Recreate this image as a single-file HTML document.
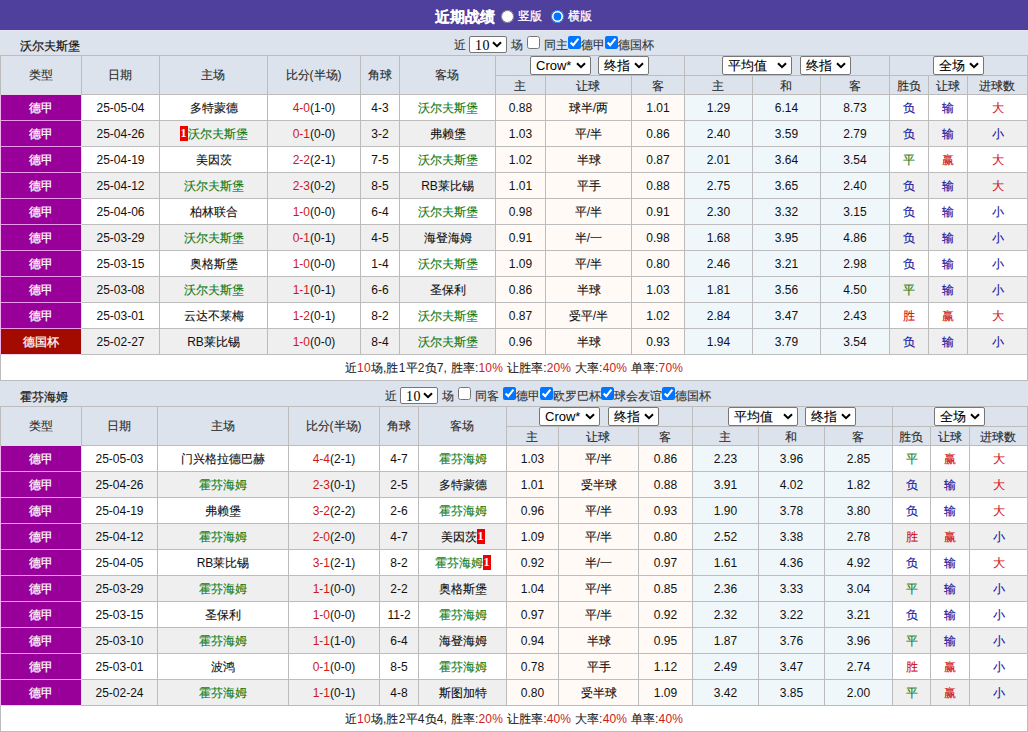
<!DOCTYPE html><html><head><meta charset="utf-8"><style>
*{margin:0;padding:0;box-sizing:border-box}
html,body{width:1028px;height:732px;overflow:hidden;background:#fff}
body{position:relative;font-family:"Liberation Sans", sans-serif;font-size:12px;color:#333}
.a,.c,.t,.sl,.cb,.rd{position:absolute}
.c{text-align:center;white-space:nowrap;overflow:hidden}
.t{white-space:nowrap;line-height:16px}
.hd{color:#2a2a2a;text-indent:-1px}
.sm{letter-spacing:0.18px;color:#222;padding-top:1px}
.k{font-style:normal;-webkit-text-stroke:0.12px currentColor}
.wt .k{-webkit-text-stroke:0.3px currentColor}
.lg .k{-webkit-text-stroke:0.25px currentColor}
.nm .k{-webkit-text-stroke:0.2px currentColor}
.dr{padding-top:1px;color:#111}
.lg{color:#fff}
.r{color:#cc1a1a}
.g{color:#117a11}
.bd{display:inline-block;background:#e00;color:#fff;width:8px;height:15px;line-height:15px;font-size:12px;font-weight:bold;text-align:center;vertical-align:middle;position:relative;top:-1px;font-family:"Liberation Serif",serif;overflow:hidden}
.sl{font-size:13px;color:#000;background:#fff;border:1px solid #767676;border-radius:2px;white-space:nowrap}
.sl10{position:absolute;font-family:"Liberation Serif",serif;font-size:14px;letter-spacing:0.5px;color:#000;background:#fff;border:1px solid #767676;border-radius:2px;white-space:nowrap}
.cb{width:13px;height:13px;margin:0}
.rd{width:13px;height:13px;margin:0}
</style></head><body><div class="a" style="left:0px;top:0px;width:1028px;height:30px;background:#50409e;"></div><div class="a" style="left:0px;top:30px;width:1028px;height:1px;background:#e4e4f6;"></div><div class="t" style="left:435px;top:7px;color:#fff;font-weight:bold;font-size:15px;line-height:20px"><i class="k">近期战绩</i></div><input type="radio" class="rd" style="left:501px;top:10px"><div class="t wt" style="left:518px;top:8px;color:#fff;line-height:16px"><i class="k">竖版</i></div><input type="radio" class="rd" checked style="left:551px;top:10px"><div class="t wt" style="left:568px;top:8px;color:#fff;line-height:16px"><i class="k">横版</i></div><div class="a" style="left:0px;top:31px;width:1028px;height:24px;background:#dce3ed;"></div><div class="a" style="left:0px;top:55px;width:1028px;height:39px;background:#dce3ed;"></div><div class="t nm" style="left:20px;top:38px;font-weight:500;font-size:12px;color:#111;line-height:16px"><i class="k">沃尔夫斯堡</i></div><div class="t" style="left:454px;top:37px;"><i class="k">近</i></div><div class="sl10" style="left:469px;top:36px;width:38px;height:17px;line-height:15px"><span style="position:absolute;left:5px;top:1px">10</span><svg width="10" height="7" viewBox="0 0 10 7" style="position:absolute;right:4px;top:50%;margin-top:-4px"><path d="M1 1.2 L5 5.2 L9 1.2" fill="none" stroke="#000" stroke-width="2"/></svg></div><div class="t" style="left:511px;top:37px;"><i class="k">场</i></div><input type="checkbox" class="cb" style="left:527px;top:36px" ><div class="t" style="left:544px;top:37px;"><i class="k">同主</i></div><input type="checkbox" class="cb" style="left:568px;top:36px" checked><div class="t" style="left:581px;top:37px;"><i class="k">德甲</i></div><input type="checkbox" class="cb" style="left:605px;top:36px" checked><div class="t" style="left:618px;top:37px;"><i class="k">德国杯</i></div><div class="sl" style="left:530px;top:56px;width:61px;height:19px;line-height:17px"><span style="position:absolute;left:5px;top:0px">Crow*</span><svg width="10" height="7" viewBox="0 0 10 7" style="position:absolute;right:4px;top:50%;margin-top:-4px"><path d="M1 1.2 L5 5.2 L9 1.2" fill="none" stroke="#000" stroke-width="2"/></svg></div><div class="sl" style="left:598px;top:56px;width:51px;height:19px;line-height:17px"><span style="position:absolute;left:5px;top:0px"><i class="k">终指</i></span><svg width="10" height="7" viewBox="0 0 10 7" style="position:absolute;right:4px;top:50%;margin-top:-4px"><path d="M1 1.2 L5 5.2 L9 1.2" fill="none" stroke="#000" stroke-width="2"/></svg></div><div class="sl" style="left:722px;top:56px;width:70px;height:19px;line-height:17px"><span style="position:absolute;left:5px;top:0px"><i class="k">平均值</i></span><svg width="10" height="7" viewBox="0 0 10 7" style="position:absolute;right:4px;top:50%;margin-top:-4px"><path d="M1 1.2 L5 5.2 L9 1.2" fill="none" stroke="#000" stroke-width="2"/></svg></div><div class="sl" style="left:800px;top:56px;width:51px;height:19px;line-height:17px"><span style="position:absolute;left:5px;top:0px"><i class="k">终指</i></span><svg width="10" height="7" viewBox="0 0 10 7" style="position:absolute;right:4px;top:50%;margin-top:-4px"><path d="M1 1.2 L5 5.2 L9 1.2" fill="none" stroke="#000" stroke-width="2"/></svg></div><div class="sl" style="left:933px;top:56px;width:51px;height:19px;line-height:17px"><span style="position:absolute;left:5px;top:0px"><i class="k">全场</i></span><svg width="10" height="7" viewBox="0 0 10 7" style="position:absolute;right:4px;top:50%;margin-top:-4px"><path d="M1 1.2 L5 5.2 L9 1.2" fill="none" stroke="#000" stroke-width="2"/></svg></div><div class="c hd" style="left:1px;top:56px;width:80px;height:38px;line-height:38px;"><i class="k">类型</i></div><div class="c hd" style="left:82px;top:56px;width:77px;height:38px;line-height:38px;"><i class="k">日期</i></div><div class="c hd" style="left:160px;top:56px;width:107px;height:38px;line-height:38px;"><i class="k">主场</i></div><div class="c hd" style="left:268px;top:56px;width:92px;height:38px;line-height:38px;"><i class="k">比分</i>(<i class="k">半场</i>)</div><div class="c hd" style="left:361px;top:56px;width:38px;height:38px;line-height:38px;"><i class="k">角球</i></div><div class="c hd" style="left:400px;top:56px;width:95px;height:38px;line-height:38px;"><i class="k">客场</i></div><div class="c hd" style="left:496px;top:76px;width:49px;height:18px;line-height:18px;padding-top:1px"><i class="k">主</i></div><div class="c hd" style="left:546px;top:76px;width:85px;height:18px;line-height:18px;padding-top:1px"><i class="k">让球</i></div><div class="c hd" style="left:632px;top:76px;width:52px;height:18px;line-height:18px;padding-top:1px"><i class="k">客</i></div><div class="c hd" style="left:685px;top:76px;width:67px;height:18px;line-height:18px;padding-top:1px"><i class="k">主</i></div><div class="c hd" style="left:753px;top:76px;width:67px;height:18px;line-height:18px;padding-top:1px"><i class="k">和</i></div><div class="c hd" style="left:821px;top:76px;width:68px;height:18px;line-height:18px;padding-top:1px"><i class="k">客</i></div><div class="c hd" style="left:890px;top:76px;width:38px;height:18px;line-height:18px;padding-top:1px"><i class="k">胜负</i></div><div class="c hd" style="left:929px;top:76px;width:38px;height:18px;line-height:18px;padding-top:1px"><i class="k">让球</i></div><div class="c hd" style="left:968px;top:76px;width:59px;height:18px;line-height:18px;padding-top:1px"><i class="k">进球数</i></div><div class="c lg dr" style="left:1px;top:95px;width:80px;height:25px;line-height:25px;background:#990099;"><i class="k">德甲</i></div><div class="c dr" style="left:82px;top:95px;width:77px;height:25px;line-height:25px;background:#ffffff;">25-05-04</div><div class="c dr" style="left:160px;top:95px;width:107px;height:25px;line-height:25px;background:#ffffff;"><i class="k">多特蒙德</i></div><div class="c dr" style="left:268px;top:95px;width:92px;height:25px;line-height:25px;background:#ffffff;"><span class="r">4-0</span>(1-0)</div><div class="c dr" style="left:361px;top:95px;width:38px;height:25px;line-height:25px;background:#ffffff;">4-3</div><div class="c dr" style="left:400px;top:95px;width:95px;height:25px;line-height:25px;background:#ffffff;"><span class="g"><i class="k">沃尔夫斯堡</i></span></div><div class="c dr" style="left:496px;top:95px;width:49px;height:25px;line-height:25px;background:#fffaf6;">0.88</div><div class="c dr" style="left:546px;top:95px;width:85px;height:25px;line-height:25px;background:#fffaf6;"><i class="k">球半</i>/<i class="k">两</i></div><div class="c dr" style="left:632px;top:95px;width:52px;height:25px;line-height:25px;background:#fffaf6;">1.01</div><div class="c dr" style="left:685px;top:95px;width:67px;height:25px;line-height:25px;background:#f0f7fb;">1.29</div><div class="c dr" style="left:753px;top:95px;width:67px;height:25px;line-height:25px;background:#f0f7fb;">6.14</div><div class="c dr" style="left:821px;top:95px;width:68px;height:25px;line-height:25px;background:#f0f7fb;">8.73</div><div class="c dr" style="left:890px;top:95px;width:38px;height:25px;line-height:25px;background:#ffffff;"><span style="color:#1010a0"><i class="k">负</i></span></div><div class="c dr" style="left:929px;top:95px;width:38px;height:25px;line-height:25px;background:#ffffff;"><span style="color:#1010a0"><i class="k">输</i></span></div><div class="c dr" style="left:968px;top:95px;width:59px;height:25px;line-height:25px;background:#ffffff;"><span style="color:#d01010"><i class="k">大</i></span></div><div class="c lg dr" style="left:1px;top:121px;width:80px;height:25px;line-height:25px;background:#990099;"><i class="k">德甲</i></div><div class="c dr" style="left:82px;top:121px;width:77px;height:25px;line-height:25px;background:#efefef;">25-04-26</div><div class="c dr" style="left:160px;top:121px;width:107px;height:25px;line-height:25px;background:#efefef;"><span class="bd">1</span><span class="g"><i class="k">沃尔夫斯堡</i></span></div><div class="c dr" style="left:268px;top:121px;width:92px;height:25px;line-height:25px;background:#efefef;"><span class="r">0-1</span>(0-0)</div><div class="c dr" style="left:361px;top:121px;width:38px;height:25px;line-height:25px;background:#efefef;">3-2</div><div class="c dr" style="left:400px;top:121px;width:95px;height:25px;line-height:25px;background:#efefef;"><i class="k">弗赖堡</i></div><div class="c dr" style="left:496px;top:121px;width:49px;height:25px;line-height:25px;background:#fffaf6;">1.03</div><div class="c dr" style="left:546px;top:121px;width:85px;height:25px;line-height:25px;background:#fffaf6;"><i class="k">平</i>/<i class="k">半</i></div><div class="c dr" style="left:632px;top:121px;width:52px;height:25px;line-height:25px;background:#fffaf6;">0.86</div><div class="c dr" style="left:685px;top:121px;width:67px;height:25px;line-height:25px;background:#f0f7fb;">2.40</div><div class="c dr" style="left:753px;top:121px;width:67px;height:25px;line-height:25px;background:#f0f7fb;">3.59</div><div class="c dr" style="left:821px;top:121px;width:68px;height:25px;line-height:25px;background:#f0f7fb;">2.79</div><div class="c dr" style="left:890px;top:121px;width:38px;height:25px;line-height:25px;background:#efefef;"><span style="color:#1010a0"><i class="k">负</i></span></div><div class="c dr" style="left:929px;top:121px;width:38px;height:25px;line-height:25px;background:#efefef;"><span style="color:#1010a0"><i class="k">输</i></span></div><div class="c dr" style="left:968px;top:121px;width:59px;height:25px;line-height:25px;background:#efefef;"><span style="color:#1010a0"><i class="k">小</i></span></div><div class="c lg dr" style="left:1px;top:147px;width:80px;height:25px;line-height:25px;background:#990099;"><i class="k">德甲</i></div><div class="c dr" style="left:82px;top:147px;width:77px;height:25px;line-height:25px;background:#ffffff;">25-04-19</div><div class="c dr" style="left:160px;top:147px;width:107px;height:25px;line-height:25px;background:#ffffff;"><i class="k">美因茨</i></div><div class="c dr" style="left:268px;top:147px;width:92px;height:25px;line-height:25px;background:#ffffff;"><span class="r">2-2</span>(2-1)</div><div class="c dr" style="left:361px;top:147px;width:38px;height:25px;line-height:25px;background:#ffffff;">7-5</div><div class="c dr" style="left:400px;top:147px;width:95px;height:25px;line-height:25px;background:#ffffff;"><span class="g"><i class="k">沃尔夫斯堡</i></span></div><div class="c dr" style="left:496px;top:147px;width:49px;height:25px;line-height:25px;background:#fffaf6;">1.02</div><div class="c dr" style="left:546px;top:147px;width:85px;height:25px;line-height:25px;background:#fffaf6;"><i class="k">半球</i></div><div class="c dr" style="left:632px;top:147px;width:52px;height:25px;line-height:25px;background:#fffaf6;">0.87</div><div class="c dr" style="left:685px;top:147px;width:67px;height:25px;line-height:25px;background:#f0f7fb;">2.01</div><div class="c dr" style="left:753px;top:147px;width:67px;height:25px;line-height:25px;background:#f0f7fb;">3.64</div><div class="c dr" style="left:821px;top:147px;width:68px;height:25px;line-height:25px;background:#f0f7fb;">3.54</div><div class="c dr" style="left:890px;top:147px;width:38px;height:25px;line-height:25px;background:#ffffff;"><span style="color:#117a11"><i class="k">平</i></span></div><div class="c dr" style="left:929px;top:147px;width:38px;height:25px;line-height:25px;background:#ffffff;"><span style="color:#d01010"><i class="k">赢</i></span></div><div class="c dr" style="left:968px;top:147px;width:59px;height:25px;line-height:25px;background:#ffffff;"><span style="color:#d01010"><i class="k">大</i></span></div><div class="c lg dr" style="left:1px;top:173px;width:80px;height:25px;line-height:25px;background:#990099;"><i class="k">德甲</i></div><div class="c dr" style="left:82px;top:173px;width:77px;height:25px;line-height:25px;background:#efefef;">25-04-12</div><div class="c dr" style="left:160px;top:173px;width:107px;height:25px;line-height:25px;background:#efefef;"><span class="g"><i class="k">沃尔夫斯堡</i></span></div><div class="c dr" style="left:268px;top:173px;width:92px;height:25px;line-height:25px;background:#efefef;"><span class="r">2-3</span>(0-2)</div><div class="c dr" style="left:361px;top:173px;width:38px;height:25px;line-height:25px;background:#efefef;">8-5</div><div class="c dr" style="left:400px;top:173px;width:95px;height:25px;line-height:25px;background:#efefef;">RB<i class="k">莱比锡</i></div><div class="c dr" style="left:496px;top:173px;width:49px;height:25px;line-height:25px;background:#fffaf6;">1.01</div><div class="c dr" style="left:546px;top:173px;width:85px;height:25px;line-height:25px;background:#fffaf6;"><i class="k">平手</i></div><div class="c dr" style="left:632px;top:173px;width:52px;height:25px;line-height:25px;background:#fffaf6;">0.88</div><div class="c dr" style="left:685px;top:173px;width:67px;height:25px;line-height:25px;background:#f0f7fb;">2.75</div><div class="c dr" style="left:753px;top:173px;width:67px;height:25px;line-height:25px;background:#f0f7fb;">3.65</div><div class="c dr" style="left:821px;top:173px;width:68px;height:25px;line-height:25px;background:#f0f7fb;">2.40</div><div class="c dr" style="left:890px;top:173px;width:38px;height:25px;line-height:25px;background:#efefef;"><span style="color:#1010a0"><i class="k">负</i></span></div><div class="c dr" style="left:929px;top:173px;width:38px;height:25px;line-height:25px;background:#efefef;"><span style="color:#1010a0"><i class="k">输</i></span></div><div class="c dr" style="left:968px;top:173px;width:59px;height:25px;line-height:25px;background:#efefef;"><span style="color:#d01010"><i class="k">大</i></span></div><div class="c lg dr" style="left:1px;top:199px;width:80px;height:25px;line-height:25px;background:#990099;"><i class="k">德甲</i></div><div class="c dr" style="left:82px;top:199px;width:77px;height:25px;line-height:25px;background:#ffffff;">25-04-06</div><div class="c dr" style="left:160px;top:199px;width:107px;height:25px;line-height:25px;background:#ffffff;"><i class="k">柏林联合</i></div><div class="c dr" style="left:268px;top:199px;width:92px;height:25px;line-height:25px;background:#ffffff;"><span class="r">1-0</span>(0-0)</div><div class="c dr" style="left:361px;top:199px;width:38px;height:25px;line-height:25px;background:#ffffff;">6-4</div><div class="c dr" style="left:400px;top:199px;width:95px;height:25px;line-height:25px;background:#ffffff;"><span class="g"><i class="k">沃尔夫斯堡</i></span></div><div class="c dr" style="left:496px;top:199px;width:49px;height:25px;line-height:25px;background:#fffaf6;">0.98</div><div class="c dr" style="left:546px;top:199px;width:85px;height:25px;line-height:25px;background:#fffaf6;"><i class="k">平</i>/<i class="k">半</i></div><div class="c dr" style="left:632px;top:199px;width:52px;height:25px;line-height:25px;background:#fffaf6;">0.91</div><div class="c dr" style="left:685px;top:199px;width:67px;height:25px;line-height:25px;background:#f0f7fb;">2.30</div><div class="c dr" style="left:753px;top:199px;width:67px;height:25px;line-height:25px;background:#f0f7fb;">3.32</div><div class="c dr" style="left:821px;top:199px;width:68px;height:25px;line-height:25px;background:#f0f7fb;">3.15</div><div class="c dr" style="left:890px;top:199px;width:38px;height:25px;line-height:25px;background:#ffffff;"><span style="color:#1010a0"><i class="k">负</i></span></div><div class="c dr" style="left:929px;top:199px;width:38px;height:25px;line-height:25px;background:#ffffff;"><span style="color:#1010a0"><i class="k">输</i></span></div><div class="c dr" style="left:968px;top:199px;width:59px;height:25px;line-height:25px;background:#ffffff;"><span style="color:#1010a0"><i class="k">小</i></span></div><div class="c lg dr" style="left:1px;top:225px;width:80px;height:25px;line-height:25px;background:#990099;"><i class="k">德甲</i></div><div class="c dr" style="left:82px;top:225px;width:77px;height:25px;line-height:25px;background:#efefef;">25-03-29</div><div class="c dr" style="left:160px;top:225px;width:107px;height:25px;line-height:25px;background:#efefef;"><span class="g"><i class="k">沃尔夫斯堡</i></span></div><div class="c dr" style="left:268px;top:225px;width:92px;height:25px;line-height:25px;background:#efefef;"><span class="r">0-1</span>(0-1)</div><div class="c dr" style="left:361px;top:225px;width:38px;height:25px;line-height:25px;background:#efefef;">4-5</div><div class="c dr" style="left:400px;top:225px;width:95px;height:25px;line-height:25px;background:#efefef;"><i class="k">海登海姆</i></div><div class="c dr" style="left:496px;top:225px;width:49px;height:25px;line-height:25px;background:#fffaf6;">0.91</div><div class="c dr" style="left:546px;top:225px;width:85px;height:25px;line-height:25px;background:#fffaf6;"><i class="k">半</i>/<i class="k">一</i></div><div class="c dr" style="left:632px;top:225px;width:52px;height:25px;line-height:25px;background:#fffaf6;">0.98</div><div class="c dr" style="left:685px;top:225px;width:67px;height:25px;line-height:25px;background:#f0f7fb;">1.68</div><div class="c dr" style="left:753px;top:225px;width:67px;height:25px;line-height:25px;background:#f0f7fb;">3.95</div><div class="c dr" style="left:821px;top:225px;width:68px;height:25px;line-height:25px;background:#f0f7fb;">4.86</div><div class="c dr" style="left:890px;top:225px;width:38px;height:25px;line-height:25px;background:#efefef;"><span style="color:#1010a0"><i class="k">负</i></span></div><div class="c dr" style="left:929px;top:225px;width:38px;height:25px;line-height:25px;background:#efefef;"><span style="color:#1010a0"><i class="k">输</i></span></div><div class="c dr" style="left:968px;top:225px;width:59px;height:25px;line-height:25px;background:#efefef;"><span style="color:#1010a0"><i class="k">小</i></span></div><div class="c lg dr" style="left:1px;top:251px;width:80px;height:25px;line-height:25px;background:#990099;"><i class="k">德甲</i></div><div class="c dr" style="left:82px;top:251px;width:77px;height:25px;line-height:25px;background:#ffffff;">25-03-15</div><div class="c dr" style="left:160px;top:251px;width:107px;height:25px;line-height:25px;background:#ffffff;"><i class="k">奥格斯堡</i></div><div class="c dr" style="left:268px;top:251px;width:92px;height:25px;line-height:25px;background:#ffffff;"><span class="r">1-0</span>(0-0)</div><div class="c dr" style="left:361px;top:251px;width:38px;height:25px;line-height:25px;background:#ffffff;">1-4</div><div class="c dr" style="left:400px;top:251px;width:95px;height:25px;line-height:25px;background:#ffffff;"><span class="g"><i class="k">沃尔夫斯堡</i></span></div><div class="c dr" style="left:496px;top:251px;width:49px;height:25px;line-height:25px;background:#fffaf6;">1.09</div><div class="c dr" style="left:546px;top:251px;width:85px;height:25px;line-height:25px;background:#fffaf6;"><i class="k">平</i>/<i class="k">半</i></div><div class="c dr" style="left:632px;top:251px;width:52px;height:25px;line-height:25px;background:#fffaf6;">0.80</div><div class="c dr" style="left:685px;top:251px;width:67px;height:25px;line-height:25px;background:#f0f7fb;">2.46</div><div class="c dr" style="left:753px;top:251px;width:67px;height:25px;line-height:25px;background:#f0f7fb;">3.21</div><div class="c dr" style="left:821px;top:251px;width:68px;height:25px;line-height:25px;background:#f0f7fb;">2.98</div><div class="c dr" style="left:890px;top:251px;width:38px;height:25px;line-height:25px;background:#ffffff;"><span style="color:#1010a0"><i class="k">负</i></span></div><div class="c dr" style="left:929px;top:251px;width:38px;height:25px;line-height:25px;background:#ffffff;"><span style="color:#1010a0"><i class="k">输</i></span></div><div class="c dr" style="left:968px;top:251px;width:59px;height:25px;line-height:25px;background:#ffffff;"><span style="color:#1010a0"><i class="k">小</i></span></div><div class="c lg dr" style="left:1px;top:277px;width:80px;height:25px;line-height:25px;background:#990099;"><i class="k">德甲</i></div><div class="c dr" style="left:82px;top:277px;width:77px;height:25px;line-height:25px;background:#efefef;">25-03-08</div><div class="c dr" style="left:160px;top:277px;width:107px;height:25px;line-height:25px;background:#efefef;"><span class="g"><i class="k">沃尔夫斯堡</i></span></div><div class="c dr" style="left:268px;top:277px;width:92px;height:25px;line-height:25px;background:#efefef;"><span class="r">1-1</span>(0-1)</div><div class="c dr" style="left:361px;top:277px;width:38px;height:25px;line-height:25px;background:#efefef;">6-6</div><div class="c dr" style="left:400px;top:277px;width:95px;height:25px;line-height:25px;background:#efefef;"><i class="k">圣保利</i></div><div class="c dr" style="left:496px;top:277px;width:49px;height:25px;line-height:25px;background:#fffaf6;">0.86</div><div class="c dr" style="left:546px;top:277px;width:85px;height:25px;line-height:25px;background:#fffaf6;"><i class="k">半球</i></div><div class="c dr" style="left:632px;top:277px;width:52px;height:25px;line-height:25px;background:#fffaf6;">1.03</div><div class="c dr" style="left:685px;top:277px;width:67px;height:25px;line-height:25px;background:#f0f7fb;">1.81</div><div class="c dr" style="left:753px;top:277px;width:67px;height:25px;line-height:25px;background:#f0f7fb;">3.56</div><div class="c dr" style="left:821px;top:277px;width:68px;height:25px;line-height:25px;background:#f0f7fb;">4.50</div><div class="c dr" style="left:890px;top:277px;width:38px;height:25px;line-height:25px;background:#efefef;"><span style="color:#117a11"><i class="k">平</i></span></div><div class="c dr" style="left:929px;top:277px;width:38px;height:25px;line-height:25px;background:#efefef;"><span style="color:#1010a0"><i class="k">输</i></span></div><div class="c dr" style="left:968px;top:277px;width:59px;height:25px;line-height:25px;background:#efefef;"><span style="color:#1010a0"><i class="k">小</i></span></div><div class="c lg dr" style="left:1px;top:303px;width:80px;height:25px;line-height:25px;background:#990099;"><i class="k">德甲</i></div><div class="c dr" style="left:82px;top:303px;width:77px;height:25px;line-height:25px;background:#ffffff;">25-03-01</div><div class="c dr" style="left:160px;top:303px;width:107px;height:25px;line-height:25px;background:#ffffff;"><i class="k">云达不莱梅</i></div><div class="c dr" style="left:268px;top:303px;width:92px;height:25px;line-height:25px;background:#ffffff;"><span class="r">1-2</span>(0-1)</div><div class="c dr" style="left:361px;top:303px;width:38px;height:25px;line-height:25px;background:#ffffff;">8-2</div><div class="c dr" style="left:400px;top:303px;width:95px;height:25px;line-height:25px;background:#ffffff;"><span class="g"><i class="k">沃尔夫斯堡</i></span></div><div class="c dr" style="left:496px;top:303px;width:49px;height:25px;line-height:25px;background:#fffaf6;">0.87</div><div class="c dr" style="left:546px;top:303px;width:85px;height:25px;line-height:25px;background:#fffaf6;"><i class="k">受平</i>/<i class="k">半</i></div><div class="c dr" style="left:632px;top:303px;width:52px;height:25px;line-height:25px;background:#fffaf6;">1.02</div><div class="c dr" style="left:685px;top:303px;width:67px;height:25px;line-height:25px;background:#f0f7fb;">2.84</div><div class="c dr" style="left:753px;top:303px;width:67px;height:25px;line-height:25px;background:#f0f7fb;">3.47</div><div class="c dr" style="left:821px;top:303px;width:68px;height:25px;line-height:25px;background:#f0f7fb;">2.43</div><div class="c dr" style="left:890px;top:303px;width:38px;height:25px;line-height:25px;background:#ffffff;"><span style="color:#d01010"><i class="k">胜</i></span></div><div class="c dr" style="left:929px;top:303px;width:38px;height:25px;line-height:25px;background:#ffffff;"><span style="color:#d01010"><i class="k">赢</i></span></div><div class="c dr" style="left:968px;top:303px;width:59px;height:25px;line-height:25px;background:#ffffff;"><span style="color:#d01010"><i class="k">大</i></span></div><div class="c lg dr" style="left:1px;top:329px;width:80px;height:25px;line-height:25px;background:#a30a00;"><i class="k">德国杯</i></div><div class="c dr" style="left:82px;top:329px;width:77px;height:25px;line-height:25px;background:#efefef;">25-02-27</div><div class="c dr" style="left:160px;top:329px;width:107px;height:25px;line-height:25px;background:#efefef;">RB<i class="k">莱比锡</i></div><div class="c dr" style="left:268px;top:329px;width:92px;height:25px;line-height:25px;background:#efefef;"><span class="r">1-0</span>(0-0)</div><div class="c dr" style="left:361px;top:329px;width:38px;height:25px;line-height:25px;background:#efefef;">8-4</div><div class="c dr" style="left:400px;top:329px;width:95px;height:25px;line-height:25px;background:#efefef;"><span class="g"><i class="k">沃尔夫斯堡</i></span></div><div class="c dr" style="left:496px;top:329px;width:49px;height:25px;line-height:25px;background:#fffaf6;">0.96</div><div class="c dr" style="left:546px;top:329px;width:85px;height:25px;line-height:25px;background:#fffaf6;"><i class="k">半球</i></div><div class="c dr" style="left:632px;top:329px;width:52px;height:25px;line-height:25px;background:#fffaf6;">0.93</div><div class="c dr" style="left:685px;top:329px;width:67px;height:25px;line-height:25px;background:#f0f7fb;">1.94</div><div class="c dr" style="left:753px;top:329px;width:67px;height:25px;line-height:25px;background:#f0f7fb;">3.79</div><div class="c dr" style="left:821px;top:329px;width:68px;height:25px;line-height:25px;background:#f0f7fb;">3.54</div><div class="c dr" style="left:890px;top:329px;width:38px;height:25px;line-height:25px;background:#efefef;"><span style="color:#1010a0"><i class="k">负</i></span></div><div class="c dr" style="left:929px;top:329px;width:38px;height:25px;line-height:25px;background:#efefef;"><span style="color:#1010a0"><i class="k">输</i></span></div><div class="c dr" style="left:968px;top:329px;width:59px;height:25px;line-height:25px;background:#efefef;"><span style="color:#1010a0"><i class="k">小</i></span></div><div class="c sm" style="left:1px;top:355px;width:1026px;height:25px;line-height:25px;background:#ffffff;"><i class="k">近</i><span class="r">10</span><i class="k">场</i>,<i class="k">胜</i>1<i class="k">平</i>2<i class="k">负</i>7, <i class="k">胜率</i>:<span class="r">10%</span> <i class="k">让胜率</i>:<span class="r">20%</span> <i class="k">大率</i>:<span class="r">40%</span> <i class="k">单率</i>:<span class="r">70%</span></div><div class="a" style="left:0px;top:55px;width:1028px;height:1px;background:#bcbcbc;"></div><div class="a" style="left:0px;top:94px;width:1028px;height:1px;background:#bcbcbc;"></div><div class="a" style="left:0px;top:354px;width:1028px;height:1px;background:#bcbcbc;"></div><div class="a" style="left:0px;top:380px;width:1028px;height:1px;background:#bcbcbc;"></div><div class="a" style="left:495px;top:75px;width:533px;height:1px;background:#bcbcbc;"></div><div class="a" style="left:81px;top:120px;width:947px;height:1px;background:#bcbcbc;"></div><div class="a" style="left:0px;top:120px;width:81px;height:1px;background:#eb9aeb;"></div><div class="a" style="left:81px;top:146px;width:947px;height:1px;background:#bcbcbc;"></div><div class="a" style="left:0px;top:146px;width:81px;height:1px;background:#eb9aeb;"></div><div class="a" style="left:81px;top:172px;width:947px;height:1px;background:#bcbcbc;"></div><div class="a" style="left:0px;top:172px;width:81px;height:1px;background:#eb9aeb;"></div><div class="a" style="left:81px;top:198px;width:947px;height:1px;background:#bcbcbc;"></div><div class="a" style="left:0px;top:198px;width:81px;height:1px;background:#eb9aeb;"></div><div class="a" style="left:81px;top:224px;width:947px;height:1px;background:#bcbcbc;"></div><div class="a" style="left:0px;top:224px;width:81px;height:1px;background:#eb9aeb;"></div><div class="a" style="left:81px;top:250px;width:947px;height:1px;background:#bcbcbc;"></div><div class="a" style="left:0px;top:250px;width:81px;height:1px;background:#eb9aeb;"></div><div class="a" style="left:81px;top:276px;width:947px;height:1px;background:#bcbcbc;"></div><div class="a" style="left:0px;top:276px;width:81px;height:1px;background:#eb9aeb;"></div><div class="a" style="left:81px;top:302px;width:947px;height:1px;background:#bcbcbc;"></div><div class="a" style="left:0px;top:302px;width:81px;height:1px;background:#eb9aeb;"></div><div class="a" style="left:81px;top:328px;width:947px;height:1px;background:#bcbcbc;"></div><div class="a" style="left:0px;top:328px;width:81px;height:1px;background:#eb9aeb;"></div><div class="a" style="left:1px;top:94px;width:80px;height:1px;background:#ead6ec;"></div><div class="a" style="left:1px;top:354px;width:80px;height:1px;background:#f2d2ee;"></div><div class="a" style="left:0px;top:55px;width:1px;height:40px;background:#bcbcbc;"></div><div class="a" style="left:0px;top:95px;width:1px;height:259px;background:#f0b0f0;"></div><div class="a" style="left:0px;top:354px;width:1px;height:27px;background:#bcbcbc;"></div><div class="a" style="left:1027px;top:55px;width:1px;height:326px;background:#bcbcbc;"></div><div class="a" style="left:81px;top:55px;width:1px;height:40px;background:#bcbcbc;"></div><div class="a" style="left:81px;top:95px;width:1px;height:259px;background:#f6dcf6;"></div><div class="a" style="left:159px;top:55px;width:1px;height:300px;background:#bcbcbc;"></div><div class="a" style="left:267px;top:55px;width:1px;height:300px;background:#bcbcbc;"></div><div class="a" style="left:360px;top:55px;width:1px;height:300px;background:#bcbcbc;"></div><div class="a" style="left:399px;top:55px;width:1px;height:300px;background:#bcbcbc;"></div><div class="a" style="left:495px;top:55px;width:1px;height:300px;background:#bcbcbc;"></div><div class="a" style="left:684px;top:55px;width:1px;height:300px;background:#bcbcbc;"></div><div class="a" style="left:889px;top:55px;width:1px;height:300px;background:#bcbcbc;"></div><div class="a" style="left:545px;top:75px;width:1px;height:280px;background:#bcbcbc;"></div><div class="a" style="left:631px;top:75px;width:1px;height:280px;background:#bcbcbc;"></div><div class="a" style="left:752px;top:75px;width:1px;height:280px;background:#bcbcbc;"></div><div class="a" style="left:820px;top:75px;width:1px;height:280px;background:#bcbcbc;"></div><div class="a" style="left:928px;top:75px;width:1px;height:280px;background:#bcbcbc;"></div><div class="a" style="left:967px;top:75px;width:1px;height:280px;background:#bcbcbc;"></div><div class="a" style="left:0px;top:381px;width:1028px;height:25px;background:#dce3ed;"></div><div class="a" style="left:0px;top:406px;width:1028px;height:39px;background:#dce3ed;"></div><div class="t nm" style="left:20px;top:389px;font-weight:500;font-size:12px;color:#111;line-height:16px"><i class="k">霍芬海姆</i></div><div class="t" style="left:385px;top:388px;"><i class="k">近</i></div><div class="sl10" style="left:400px;top:387px;width:38px;height:17px;line-height:15px"><span style="position:absolute;left:5px;top:1px">10</span><svg width="10" height="7" viewBox="0 0 10 7" style="position:absolute;right:4px;top:50%;margin-top:-4px"><path d="M1 1.2 L5 5.2 L9 1.2" fill="none" stroke="#000" stroke-width="2"/></svg></div><div class="t" style="left:442px;top:388px;"><i class="k">场</i></div><input type="checkbox" class="cb" style="left:458px;top:387px" ><div class="t" style="left:475px;top:388px;"><i class="k">同客</i></div><input type="checkbox" class="cb" style="left:503px;top:387px" checked><div class="t" style="left:516px;top:388px;"><i class="k">德甲</i></div><input type="checkbox" class="cb" style="left:540px;top:387px" checked><div class="t" style="left:553px;top:388px;"><i class="k">欧罗巴杯</i></div><input type="checkbox" class="cb" style="left:601px;top:387px" checked><div class="t" style="left:614px;top:388px;"><i class="k">球会友谊</i></div><input type="checkbox" class="cb" style="left:662px;top:387px" checked><div class="t" style="left:675px;top:388px;"><i class="k">德国杯</i></div><div class="sl" style="left:539px;top:407px;width:61px;height:19px;line-height:17px"><span style="position:absolute;left:5px;top:0px">Crow*</span><svg width="10" height="7" viewBox="0 0 10 7" style="position:absolute;right:4px;top:50%;margin-top:-4px"><path d="M1 1.2 L5 5.2 L9 1.2" fill="none" stroke="#000" stroke-width="2"/></svg></div><div class="sl" style="left:608px;top:407px;width:51px;height:19px;line-height:17px"><span style="position:absolute;left:5px;top:0px"><i class="k">终指</i></span><svg width="10" height="7" viewBox="0 0 10 7" style="position:absolute;right:4px;top:50%;margin-top:-4px"><path d="M1 1.2 L5 5.2 L9 1.2" fill="none" stroke="#000" stroke-width="2"/></svg></div><div class="sl" style="left:728px;top:407px;width:70px;height:19px;line-height:17px"><span style="position:absolute;left:5px;top:0px"><i class="k">平均值</i></span><svg width="10" height="7" viewBox="0 0 10 7" style="position:absolute;right:4px;top:50%;margin-top:-4px"><path d="M1 1.2 L5 5.2 L9 1.2" fill="none" stroke="#000" stroke-width="2"/></svg></div><div class="sl" style="left:805px;top:407px;width:51px;height:19px;line-height:17px"><span style="position:absolute;left:5px;top:0px"><i class="k">终指</i></span><svg width="10" height="7" viewBox="0 0 10 7" style="position:absolute;right:4px;top:50%;margin-top:-4px"><path d="M1 1.2 L5 5.2 L9 1.2" fill="none" stroke="#000" stroke-width="2"/></svg></div><div class="sl" style="left:934px;top:407px;width:51px;height:19px;line-height:17px"><span style="position:absolute;left:5px;top:0px"><i class="k">全场</i></span><svg width="10" height="7" viewBox="0 0 10 7" style="position:absolute;right:4px;top:50%;margin-top:-4px"><path d="M1 1.2 L5 5.2 L9 1.2" fill="none" stroke="#000" stroke-width="2"/></svg></div><div class="c hd" style="left:1px;top:407px;width:80px;height:38px;line-height:38px;"><i class="k">类型</i></div><div class="c hd" style="left:82px;top:407px;width:75px;height:38px;line-height:38px;"><i class="k">日期</i></div><div class="c hd" style="left:158px;top:407px;width:130px;height:38px;line-height:38px;"><i class="k">主场</i></div><div class="c hd" style="left:289px;top:407px;width:90px;height:38px;line-height:38px;"><i class="k">比分</i>(<i class="k">半场</i>)</div><div class="c hd" style="left:380px;top:407px;width:38px;height:38px;line-height:38px;"><i class="k">角球</i></div><div class="c hd" style="left:419px;top:407px;width:87px;height:38px;line-height:38px;"><i class="k">客场</i></div><div class="c hd" style="left:507px;top:427px;width:51px;height:18px;line-height:18px;padding-top:1px"><i class="k">主</i></div><div class="c hd" style="left:559px;top:427px;width:79px;height:18px;line-height:18px;padding-top:1px"><i class="k">让球</i></div><div class="c hd" style="left:639px;top:427px;width:53px;height:18px;line-height:18px;padding-top:1px"><i class="k">客</i></div><div class="c hd" style="left:693px;top:427px;width:65px;height:18px;line-height:18px;padding-top:1px"><i class="k">主</i></div><div class="c hd" style="left:759px;top:427px;width:65px;height:18px;line-height:18px;padding-top:1px"><i class="k">和</i></div><div class="c hd" style="left:825px;top:427px;width:67px;height:18px;line-height:18px;padding-top:1px"><i class="k">客</i></div><div class="c hd" style="left:893px;top:427px;width:37px;height:18px;line-height:18px;padding-top:1px"><i class="k">胜负</i></div><div class="c hd" style="left:931px;top:427px;width:38px;height:18px;line-height:18px;padding-top:1px"><i class="k">让球</i></div><div class="c hd" style="left:970px;top:427px;width:57px;height:18px;line-height:18px;padding-top:1px"><i class="k">进球数</i></div><div class="c lg dr" style="left:1px;top:446px;width:80px;height:25px;line-height:25px;background:#990099;"><i class="k">德甲</i></div><div class="c dr" style="left:82px;top:446px;width:75px;height:25px;line-height:25px;background:#ffffff;">25-05-03</div><div class="c dr" style="left:158px;top:446px;width:130px;height:25px;line-height:25px;background:#ffffff;"><i class="k">门兴格拉德巴赫</i></div><div class="c dr" style="left:289px;top:446px;width:90px;height:25px;line-height:25px;background:#ffffff;"><span class="r">4-4</span>(2-1)</div><div class="c dr" style="left:380px;top:446px;width:38px;height:25px;line-height:25px;background:#ffffff;">4-7</div><div class="c dr" style="left:419px;top:446px;width:87px;height:25px;line-height:25px;background:#ffffff;"><span class="g"><i class="k">霍芬海姆</i></span></div><div class="c dr" style="left:507px;top:446px;width:51px;height:25px;line-height:25px;background:#fffaf6;">1.03</div><div class="c dr" style="left:559px;top:446px;width:79px;height:25px;line-height:25px;background:#fffaf6;"><i class="k">平</i>/<i class="k">半</i></div><div class="c dr" style="left:639px;top:446px;width:53px;height:25px;line-height:25px;background:#fffaf6;">0.86</div><div class="c dr" style="left:693px;top:446px;width:65px;height:25px;line-height:25px;background:#f0f7fb;">2.23</div><div class="c dr" style="left:759px;top:446px;width:65px;height:25px;line-height:25px;background:#f0f7fb;">3.96</div><div class="c dr" style="left:825px;top:446px;width:67px;height:25px;line-height:25px;background:#f0f7fb;">2.85</div><div class="c dr" style="left:893px;top:446px;width:37px;height:25px;line-height:25px;background:#ffffff;"><span style="color:#117a11"><i class="k">平</i></span></div><div class="c dr" style="left:931px;top:446px;width:38px;height:25px;line-height:25px;background:#ffffff;"><span style="color:#d01010"><i class="k">赢</i></span></div><div class="c dr" style="left:970px;top:446px;width:57px;height:25px;line-height:25px;background:#ffffff;"><span style="color:#d01010"><i class="k">大</i></span></div><div class="c lg dr" style="left:1px;top:472px;width:80px;height:25px;line-height:25px;background:#990099;"><i class="k">德甲</i></div><div class="c dr" style="left:82px;top:472px;width:75px;height:25px;line-height:25px;background:#efefef;">25-04-26</div><div class="c dr" style="left:158px;top:472px;width:130px;height:25px;line-height:25px;background:#efefef;"><span class="g"><i class="k">霍芬海姆</i></span></div><div class="c dr" style="left:289px;top:472px;width:90px;height:25px;line-height:25px;background:#efefef;"><span class="r">2-3</span>(0-1)</div><div class="c dr" style="left:380px;top:472px;width:38px;height:25px;line-height:25px;background:#efefef;">2-5</div><div class="c dr" style="left:419px;top:472px;width:87px;height:25px;line-height:25px;background:#efefef;"><i class="k">多特蒙德</i></div><div class="c dr" style="left:507px;top:472px;width:51px;height:25px;line-height:25px;background:#fffaf6;">1.01</div><div class="c dr" style="left:559px;top:472px;width:79px;height:25px;line-height:25px;background:#fffaf6;"><i class="k">受半球</i></div><div class="c dr" style="left:639px;top:472px;width:53px;height:25px;line-height:25px;background:#fffaf6;">0.88</div><div class="c dr" style="left:693px;top:472px;width:65px;height:25px;line-height:25px;background:#f0f7fb;">3.91</div><div class="c dr" style="left:759px;top:472px;width:65px;height:25px;line-height:25px;background:#f0f7fb;">4.02</div><div class="c dr" style="left:825px;top:472px;width:67px;height:25px;line-height:25px;background:#f0f7fb;">1.82</div><div class="c dr" style="left:893px;top:472px;width:37px;height:25px;line-height:25px;background:#efefef;"><span style="color:#1010a0"><i class="k">负</i></span></div><div class="c dr" style="left:931px;top:472px;width:38px;height:25px;line-height:25px;background:#efefef;"><span style="color:#1010a0"><i class="k">输</i></span></div><div class="c dr" style="left:970px;top:472px;width:57px;height:25px;line-height:25px;background:#efefef;"><span style="color:#d01010"><i class="k">大</i></span></div><div class="c lg dr" style="left:1px;top:498px;width:80px;height:25px;line-height:25px;background:#990099;"><i class="k">德甲</i></div><div class="c dr" style="left:82px;top:498px;width:75px;height:25px;line-height:25px;background:#ffffff;">25-04-19</div><div class="c dr" style="left:158px;top:498px;width:130px;height:25px;line-height:25px;background:#ffffff;"><i class="k">弗赖堡</i></div><div class="c dr" style="left:289px;top:498px;width:90px;height:25px;line-height:25px;background:#ffffff;"><span class="r">3-2</span>(2-2)</div><div class="c dr" style="left:380px;top:498px;width:38px;height:25px;line-height:25px;background:#ffffff;">2-6</div><div class="c dr" style="left:419px;top:498px;width:87px;height:25px;line-height:25px;background:#ffffff;"><span class="g"><i class="k">霍芬海姆</i></span></div><div class="c dr" style="left:507px;top:498px;width:51px;height:25px;line-height:25px;background:#fffaf6;">0.96</div><div class="c dr" style="left:559px;top:498px;width:79px;height:25px;line-height:25px;background:#fffaf6;"><i class="k">平</i>/<i class="k">半</i></div><div class="c dr" style="left:639px;top:498px;width:53px;height:25px;line-height:25px;background:#fffaf6;">0.93</div><div class="c dr" style="left:693px;top:498px;width:65px;height:25px;line-height:25px;background:#f0f7fb;">1.90</div><div class="c dr" style="left:759px;top:498px;width:65px;height:25px;line-height:25px;background:#f0f7fb;">3.78</div><div class="c dr" style="left:825px;top:498px;width:67px;height:25px;line-height:25px;background:#f0f7fb;">3.80</div><div class="c dr" style="left:893px;top:498px;width:37px;height:25px;line-height:25px;background:#ffffff;"><span style="color:#1010a0"><i class="k">负</i></span></div><div class="c dr" style="left:931px;top:498px;width:38px;height:25px;line-height:25px;background:#ffffff;"><span style="color:#1010a0"><i class="k">输</i></span></div><div class="c dr" style="left:970px;top:498px;width:57px;height:25px;line-height:25px;background:#ffffff;"><span style="color:#d01010"><i class="k">大</i></span></div><div class="c lg dr" style="left:1px;top:524px;width:80px;height:25px;line-height:25px;background:#990099;"><i class="k">德甲</i></div><div class="c dr" style="left:82px;top:524px;width:75px;height:25px;line-height:25px;background:#efefef;">25-04-12</div><div class="c dr" style="left:158px;top:524px;width:130px;height:25px;line-height:25px;background:#efefef;"><span class="g"><i class="k">霍芬海姆</i></span></div><div class="c dr" style="left:289px;top:524px;width:90px;height:25px;line-height:25px;background:#efefef;"><span class="r">2-0</span>(2-0)</div><div class="c dr" style="left:380px;top:524px;width:38px;height:25px;line-height:25px;background:#efefef;">4-7</div><div class="c dr" style="left:419px;top:524px;width:87px;height:25px;line-height:25px;background:#efefef;"><i class="k">美因茨</i><span class="bd">1</span></div><div class="c dr" style="left:507px;top:524px;width:51px;height:25px;line-height:25px;background:#fffaf6;">1.09</div><div class="c dr" style="left:559px;top:524px;width:79px;height:25px;line-height:25px;background:#fffaf6;"><i class="k">平</i>/<i class="k">半</i></div><div class="c dr" style="left:639px;top:524px;width:53px;height:25px;line-height:25px;background:#fffaf6;">0.80</div><div class="c dr" style="left:693px;top:524px;width:65px;height:25px;line-height:25px;background:#f0f7fb;">2.52</div><div class="c dr" style="left:759px;top:524px;width:65px;height:25px;line-height:25px;background:#f0f7fb;">3.38</div><div class="c dr" style="left:825px;top:524px;width:67px;height:25px;line-height:25px;background:#f0f7fb;">2.78</div><div class="c dr" style="left:893px;top:524px;width:37px;height:25px;line-height:25px;background:#efefef;"><span style="color:#d01010"><i class="k">胜</i></span></div><div class="c dr" style="left:931px;top:524px;width:38px;height:25px;line-height:25px;background:#efefef;"><span style="color:#d01010"><i class="k">赢</i></span></div><div class="c dr" style="left:970px;top:524px;width:57px;height:25px;line-height:25px;background:#efefef;"><span style="color:#1010a0"><i class="k">小</i></span></div><div class="c lg dr" style="left:1px;top:550px;width:80px;height:25px;line-height:25px;background:#990099;"><i class="k">德甲</i></div><div class="c dr" style="left:82px;top:550px;width:75px;height:25px;line-height:25px;background:#ffffff;">25-04-05</div><div class="c dr" style="left:158px;top:550px;width:130px;height:25px;line-height:25px;background:#ffffff;">RB<i class="k">莱比锡</i></div><div class="c dr" style="left:289px;top:550px;width:90px;height:25px;line-height:25px;background:#ffffff;"><span class="r">3-1</span>(2-1)</div><div class="c dr" style="left:380px;top:550px;width:38px;height:25px;line-height:25px;background:#ffffff;">8-2</div><div class="c dr" style="left:419px;top:550px;width:87px;height:25px;line-height:25px;background:#ffffff;"><span class="g"><i class="k">霍芬海姆</i></span><span class="bd">1</span></div><div class="c dr" style="left:507px;top:550px;width:51px;height:25px;line-height:25px;background:#fffaf6;">0.92</div><div class="c dr" style="left:559px;top:550px;width:79px;height:25px;line-height:25px;background:#fffaf6;"><i class="k">半</i>/<i class="k">一</i></div><div class="c dr" style="left:639px;top:550px;width:53px;height:25px;line-height:25px;background:#fffaf6;">0.97</div><div class="c dr" style="left:693px;top:550px;width:65px;height:25px;line-height:25px;background:#f0f7fb;">1.61</div><div class="c dr" style="left:759px;top:550px;width:65px;height:25px;line-height:25px;background:#f0f7fb;">4.36</div><div class="c dr" style="left:825px;top:550px;width:67px;height:25px;line-height:25px;background:#f0f7fb;">4.92</div><div class="c dr" style="left:893px;top:550px;width:37px;height:25px;line-height:25px;background:#ffffff;"><span style="color:#1010a0"><i class="k">负</i></span></div><div class="c dr" style="left:931px;top:550px;width:38px;height:25px;line-height:25px;background:#ffffff;"><span style="color:#1010a0"><i class="k">输</i></span></div><div class="c dr" style="left:970px;top:550px;width:57px;height:25px;line-height:25px;background:#ffffff;"><span style="color:#d01010"><i class="k">大</i></span></div><div class="c lg dr" style="left:1px;top:576px;width:80px;height:25px;line-height:25px;background:#990099;"><i class="k">德甲</i></div><div class="c dr" style="left:82px;top:576px;width:75px;height:25px;line-height:25px;background:#efefef;">25-03-29</div><div class="c dr" style="left:158px;top:576px;width:130px;height:25px;line-height:25px;background:#efefef;"><span class="g"><i class="k">霍芬海姆</i></span></div><div class="c dr" style="left:289px;top:576px;width:90px;height:25px;line-height:25px;background:#efefef;"><span class="r">1-1</span>(0-0)</div><div class="c dr" style="left:380px;top:576px;width:38px;height:25px;line-height:25px;background:#efefef;">2-2</div><div class="c dr" style="left:419px;top:576px;width:87px;height:25px;line-height:25px;background:#efefef;"><i class="k">奥格斯堡</i></div><div class="c dr" style="left:507px;top:576px;width:51px;height:25px;line-height:25px;background:#fffaf6;">1.04</div><div class="c dr" style="left:559px;top:576px;width:79px;height:25px;line-height:25px;background:#fffaf6;"><i class="k">平</i>/<i class="k">半</i></div><div class="c dr" style="left:639px;top:576px;width:53px;height:25px;line-height:25px;background:#fffaf6;">0.85</div><div class="c dr" style="left:693px;top:576px;width:65px;height:25px;line-height:25px;background:#f0f7fb;">2.36</div><div class="c dr" style="left:759px;top:576px;width:65px;height:25px;line-height:25px;background:#f0f7fb;">3.33</div><div class="c dr" style="left:825px;top:576px;width:67px;height:25px;line-height:25px;background:#f0f7fb;">3.04</div><div class="c dr" style="left:893px;top:576px;width:37px;height:25px;line-height:25px;background:#efefef;"><span style="color:#117a11"><i class="k">平</i></span></div><div class="c dr" style="left:931px;top:576px;width:38px;height:25px;line-height:25px;background:#efefef;"><span style="color:#1010a0"><i class="k">输</i></span></div><div class="c dr" style="left:970px;top:576px;width:57px;height:25px;line-height:25px;background:#efefef;"><span style="color:#1010a0"><i class="k">小</i></span></div><div class="c lg dr" style="left:1px;top:602px;width:80px;height:25px;line-height:25px;background:#990099;"><i class="k">德甲</i></div><div class="c dr" style="left:82px;top:602px;width:75px;height:25px;line-height:25px;background:#ffffff;">25-03-15</div><div class="c dr" style="left:158px;top:602px;width:130px;height:25px;line-height:25px;background:#ffffff;"><i class="k">圣保利</i></div><div class="c dr" style="left:289px;top:602px;width:90px;height:25px;line-height:25px;background:#ffffff;"><span class="r">1-0</span>(0-0)</div><div class="c dr" style="left:380px;top:602px;width:38px;height:25px;line-height:25px;background:#ffffff;">11-2</div><div class="c dr" style="left:419px;top:602px;width:87px;height:25px;line-height:25px;background:#ffffff;"><span class="g"><i class="k">霍芬海姆</i></span></div><div class="c dr" style="left:507px;top:602px;width:51px;height:25px;line-height:25px;background:#fffaf6;">0.97</div><div class="c dr" style="left:559px;top:602px;width:79px;height:25px;line-height:25px;background:#fffaf6;"><i class="k">平</i>/<i class="k">半</i></div><div class="c dr" style="left:639px;top:602px;width:53px;height:25px;line-height:25px;background:#fffaf6;">0.92</div><div class="c dr" style="left:693px;top:602px;width:65px;height:25px;line-height:25px;background:#f0f7fb;">2.32</div><div class="c dr" style="left:759px;top:602px;width:65px;height:25px;line-height:25px;background:#f0f7fb;">3.22</div><div class="c dr" style="left:825px;top:602px;width:67px;height:25px;line-height:25px;background:#f0f7fb;">3.21</div><div class="c dr" style="left:893px;top:602px;width:37px;height:25px;line-height:25px;background:#ffffff;"><span style="color:#1010a0"><i class="k">负</i></span></div><div class="c dr" style="left:931px;top:602px;width:38px;height:25px;line-height:25px;background:#ffffff;"><span style="color:#1010a0"><i class="k">输</i></span></div><div class="c dr" style="left:970px;top:602px;width:57px;height:25px;line-height:25px;background:#ffffff;"><span style="color:#1010a0"><i class="k">小</i></span></div><div class="c lg dr" style="left:1px;top:628px;width:80px;height:25px;line-height:25px;background:#990099;"><i class="k">德甲</i></div><div class="c dr" style="left:82px;top:628px;width:75px;height:25px;line-height:25px;background:#efefef;">25-03-10</div><div class="c dr" style="left:158px;top:628px;width:130px;height:25px;line-height:25px;background:#efefef;"><span class="g"><i class="k">霍芬海姆</i></span></div><div class="c dr" style="left:289px;top:628px;width:90px;height:25px;line-height:25px;background:#efefef;"><span class="r">1-1</span>(1-0)</div><div class="c dr" style="left:380px;top:628px;width:38px;height:25px;line-height:25px;background:#efefef;">6-4</div><div class="c dr" style="left:419px;top:628px;width:87px;height:25px;line-height:25px;background:#efefef;"><i class="k">海登海姆</i></div><div class="c dr" style="left:507px;top:628px;width:51px;height:25px;line-height:25px;background:#fffaf6;">0.94</div><div class="c dr" style="left:559px;top:628px;width:79px;height:25px;line-height:25px;background:#fffaf6;"><i class="k">半球</i></div><div class="c dr" style="left:639px;top:628px;width:53px;height:25px;line-height:25px;background:#fffaf6;">0.95</div><div class="c dr" style="left:693px;top:628px;width:65px;height:25px;line-height:25px;background:#f0f7fb;">1.87</div><div class="c dr" style="left:759px;top:628px;width:65px;height:25px;line-height:25px;background:#f0f7fb;">3.76</div><div class="c dr" style="left:825px;top:628px;width:67px;height:25px;line-height:25px;background:#f0f7fb;">3.96</div><div class="c dr" style="left:893px;top:628px;width:37px;height:25px;line-height:25px;background:#efefef;"><span style="color:#117a11"><i class="k">平</i></span></div><div class="c dr" style="left:931px;top:628px;width:38px;height:25px;line-height:25px;background:#efefef;"><span style="color:#1010a0"><i class="k">输</i></span></div><div class="c dr" style="left:970px;top:628px;width:57px;height:25px;line-height:25px;background:#efefef;"><span style="color:#1010a0"><i class="k">小</i></span></div><div class="c lg dr" style="left:1px;top:654px;width:80px;height:25px;line-height:25px;background:#990099;"><i class="k">德甲</i></div><div class="c dr" style="left:82px;top:654px;width:75px;height:25px;line-height:25px;background:#ffffff;">25-03-01</div><div class="c dr" style="left:158px;top:654px;width:130px;height:25px;line-height:25px;background:#ffffff;"><i class="k">波鸿</i></div><div class="c dr" style="left:289px;top:654px;width:90px;height:25px;line-height:25px;background:#ffffff;"><span class="r">0-1</span>(0-0)</div><div class="c dr" style="left:380px;top:654px;width:38px;height:25px;line-height:25px;background:#ffffff;">8-5</div><div class="c dr" style="left:419px;top:654px;width:87px;height:25px;line-height:25px;background:#ffffff;"><span class="g"><i class="k">霍芬海姆</i></span></div><div class="c dr" style="left:507px;top:654px;width:51px;height:25px;line-height:25px;background:#fffaf6;">0.78</div><div class="c dr" style="left:559px;top:654px;width:79px;height:25px;line-height:25px;background:#fffaf6;"><i class="k">平手</i></div><div class="c dr" style="left:639px;top:654px;width:53px;height:25px;line-height:25px;background:#fffaf6;">1.12</div><div class="c dr" style="left:693px;top:654px;width:65px;height:25px;line-height:25px;background:#f0f7fb;">2.49</div><div class="c dr" style="left:759px;top:654px;width:65px;height:25px;line-height:25px;background:#f0f7fb;">3.47</div><div class="c dr" style="left:825px;top:654px;width:67px;height:25px;line-height:25px;background:#f0f7fb;">2.74</div><div class="c dr" style="left:893px;top:654px;width:37px;height:25px;line-height:25px;background:#ffffff;"><span style="color:#d01010"><i class="k">胜</i></span></div><div class="c dr" style="left:931px;top:654px;width:38px;height:25px;line-height:25px;background:#ffffff;"><span style="color:#d01010"><i class="k">赢</i></span></div><div class="c dr" style="left:970px;top:654px;width:57px;height:25px;line-height:25px;background:#ffffff;"><span style="color:#1010a0"><i class="k">小</i></span></div><div class="c lg dr" style="left:1px;top:680px;width:80px;height:25px;line-height:25px;background:#990099;"><i class="k">德甲</i></div><div class="c dr" style="left:82px;top:680px;width:75px;height:25px;line-height:25px;background:#efefef;">25-02-24</div><div class="c dr" style="left:158px;top:680px;width:130px;height:25px;line-height:25px;background:#efefef;"><span class="g"><i class="k">霍芬海姆</i></span></div><div class="c dr" style="left:289px;top:680px;width:90px;height:25px;line-height:25px;background:#efefef;"><span class="r">1-1</span>(0-1)</div><div class="c dr" style="left:380px;top:680px;width:38px;height:25px;line-height:25px;background:#efefef;">4-8</div><div class="c dr" style="left:419px;top:680px;width:87px;height:25px;line-height:25px;background:#efefef;"><i class="k">斯图加特</i></div><div class="c dr" style="left:507px;top:680px;width:51px;height:25px;line-height:25px;background:#fffaf6;">0.80</div><div class="c dr" style="left:559px;top:680px;width:79px;height:25px;line-height:25px;background:#fffaf6;"><i class="k">受半球</i></div><div class="c dr" style="left:639px;top:680px;width:53px;height:25px;line-height:25px;background:#fffaf6;">1.09</div><div class="c dr" style="left:693px;top:680px;width:65px;height:25px;line-height:25px;background:#f0f7fb;">3.42</div><div class="c dr" style="left:759px;top:680px;width:65px;height:25px;line-height:25px;background:#f0f7fb;">3.85</div><div class="c dr" style="left:825px;top:680px;width:67px;height:25px;line-height:25px;background:#f0f7fb;">2.00</div><div class="c dr" style="left:893px;top:680px;width:37px;height:25px;line-height:25px;background:#efefef;"><span style="color:#117a11"><i class="k">平</i></span></div><div class="c dr" style="left:931px;top:680px;width:38px;height:25px;line-height:25px;background:#efefef;"><span style="color:#d01010"><i class="k">赢</i></span></div><div class="c dr" style="left:970px;top:680px;width:57px;height:25px;line-height:25px;background:#efefef;"><span style="color:#1010a0"><i class="k">小</i></span></div><div class="c sm" style="left:1px;top:706px;width:1026px;height:25px;line-height:25px;background:#ffffff;"><i class="k">近</i><span class="r">10</span><i class="k">场</i>,<i class="k">胜</i>2<i class="k">平</i>4<i class="k">负</i>4, <i class="k">胜率</i>:<span class="r">20%</span> <i class="k">让胜率</i>:<span class="r">40%</span> <i class="k">大率</i>:<span class="r">40%</span> <i class="k">单率</i>:<span class="r">40%</span></div><div class="a" style="left:0px;top:406px;width:1028px;height:1px;background:#bcbcbc;"></div><div class="a" style="left:0px;top:445px;width:1028px;height:1px;background:#bcbcbc;"></div><div class="a" style="left:0px;top:705px;width:1028px;height:1px;background:#bcbcbc;"></div><div class="a" style="left:0px;top:731px;width:1028px;height:1px;background:#bcbcbc;"></div><div class="a" style="left:506px;top:426px;width:522px;height:1px;background:#bcbcbc;"></div><div class="a" style="left:81px;top:471px;width:947px;height:1px;background:#bcbcbc;"></div><div class="a" style="left:0px;top:471px;width:81px;height:1px;background:#eb9aeb;"></div><div class="a" style="left:81px;top:497px;width:947px;height:1px;background:#bcbcbc;"></div><div class="a" style="left:0px;top:497px;width:81px;height:1px;background:#eb9aeb;"></div><div class="a" style="left:81px;top:523px;width:947px;height:1px;background:#bcbcbc;"></div><div class="a" style="left:0px;top:523px;width:81px;height:1px;background:#eb9aeb;"></div><div class="a" style="left:81px;top:549px;width:947px;height:1px;background:#bcbcbc;"></div><div class="a" style="left:0px;top:549px;width:81px;height:1px;background:#eb9aeb;"></div><div class="a" style="left:81px;top:575px;width:947px;height:1px;background:#bcbcbc;"></div><div class="a" style="left:0px;top:575px;width:81px;height:1px;background:#eb9aeb;"></div><div class="a" style="left:81px;top:601px;width:947px;height:1px;background:#bcbcbc;"></div><div class="a" style="left:0px;top:601px;width:81px;height:1px;background:#eb9aeb;"></div><div class="a" style="left:81px;top:627px;width:947px;height:1px;background:#bcbcbc;"></div><div class="a" style="left:0px;top:627px;width:81px;height:1px;background:#eb9aeb;"></div><div class="a" style="left:81px;top:653px;width:947px;height:1px;background:#bcbcbc;"></div><div class="a" style="left:0px;top:653px;width:81px;height:1px;background:#eb9aeb;"></div><div class="a" style="left:81px;top:679px;width:947px;height:1px;background:#bcbcbc;"></div><div class="a" style="left:0px;top:679px;width:81px;height:1px;background:#eb9aeb;"></div><div class="a" style="left:1px;top:445px;width:80px;height:1px;background:#ead6ec;"></div><div class="a" style="left:1px;top:705px;width:80px;height:1px;background:#f2d2ee;"></div><div class="a" style="left:0px;top:406px;width:1px;height:40px;background:#bcbcbc;"></div><div class="a" style="left:0px;top:446px;width:1px;height:259px;background:#f0b0f0;"></div><div class="a" style="left:0px;top:705px;width:1px;height:27px;background:#bcbcbc;"></div><div class="a" style="left:1027px;top:406px;width:1px;height:326px;background:#bcbcbc;"></div><div class="a" style="left:81px;top:406px;width:1px;height:40px;background:#bcbcbc;"></div><div class="a" style="left:81px;top:446px;width:1px;height:259px;background:#f6dcf6;"></div><div class="a" style="left:157px;top:406px;width:1px;height:300px;background:#bcbcbc;"></div><div class="a" style="left:288px;top:406px;width:1px;height:300px;background:#bcbcbc;"></div><div class="a" style="left:379px;top:406px;width:1px;height:300px;background:#bcbcbc;"></div><div class="a" style="left:418px;top:406px;width:1px;height:300px;background:#bcbcbc;"></div><div class="a" style="left:506px;top:406px;width:1px;height:300px;background:#bcbcbc;"></div><div class="a" style="left:692px;top:406px;width:1px;height:300px;background:#bcbcbc;"></div><div class="a" style="left:892px;top:406px;width:1px;height:300px;background:#bcbcbc;"></div><div class="a" style="left:558px;top:426px;width:1px;height:280px;background:#bcbcbc;"></div><div class="a" style="left:638px;top:426px;width:1px;height:280px;background:#bcbcbc;"></div><div class="a" style="left:758px;top:426px;width:1px;height:280px;background:#bcbcbc;"></div><div class="a" style="left:824px;top:426px;width:1px;height:280px;background:#bcbcbc;"></div><div class="a" style="left:930px;top:426px;width:1px;height:280px;background:#bcbcbc;"></div><div class="a" style="left:969px;top:426px;width:1px;height:280px;background:#bcbcbc;"></div></body></html>
